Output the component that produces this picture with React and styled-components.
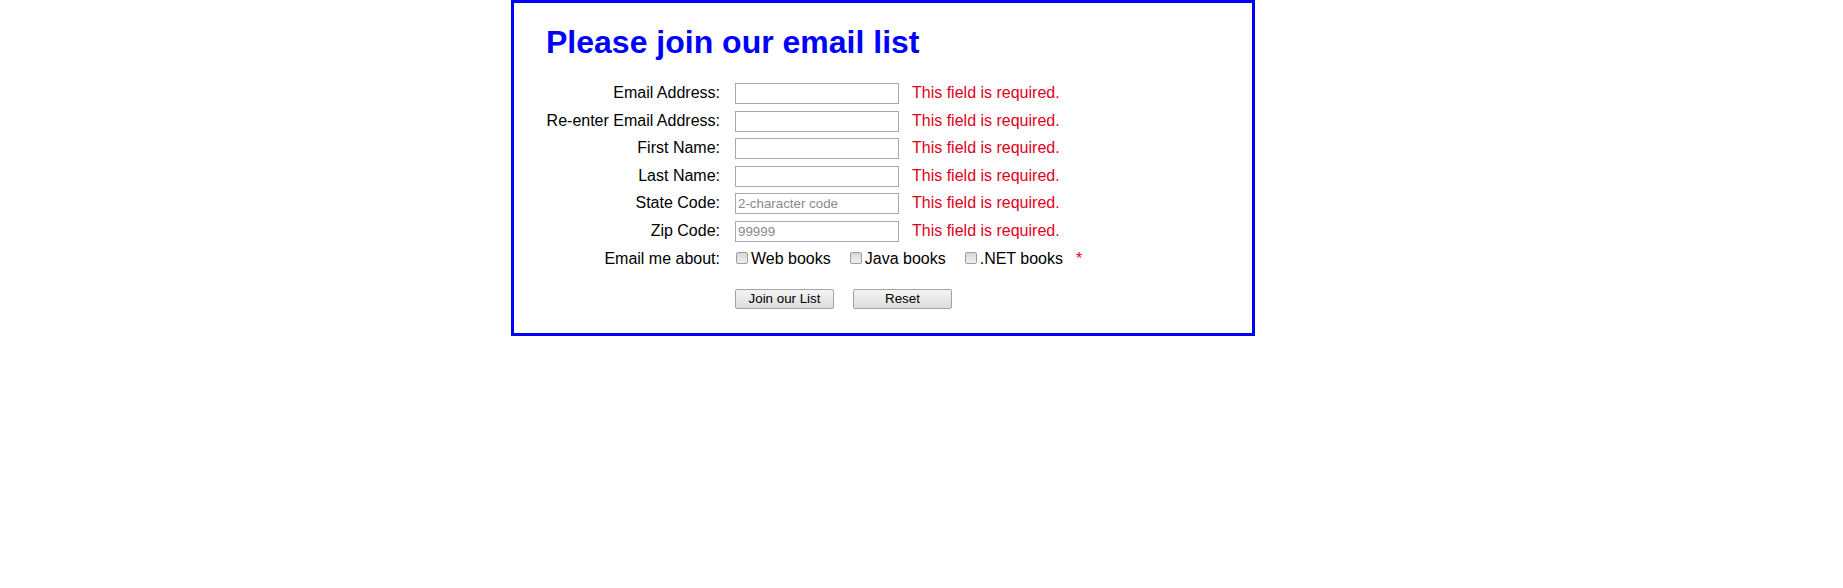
import React from 'react';
import styled, { createGlobalStyle } from 'styled-components';

const GlobalStyle = createGlobalStyle`
    html, body {
        margin: 0;
        padding: 0;
        background: #ffffff;
    }
    body {
        font-family: "Liberation Sans", Arial, sans-serif;
        font-size: 16px;
        color: #000000;
    }
`

//Page box
const Main = styled.main`
    box-sizing: border-box;
    width: 744px;
    margin-left: 511px;
    padding: 0 32px 24px 32px;
    border: 3px solid #0000ff;
    background-color: #ffffff;
`
const Title = styled.h1`
    margin: 21px 0 22px 0;
    font-size: 32px;
    font-weight: 700;
    color: #0000ff;
`

//Form
const Form = styled.form`
    display: flex;
    flex-direction: column;
    row-gap: 6.6px;
`
const Row = styled.div`
    display: flex;
    flex-direction: row;
    align-items: baseline;
    margin-top: ${p => (p.$shift ? '1px' : '0')};
`
const Label = styled.label`
    width: 174px;
    flex-shrink: 0;
    text-align: right;
`
const TextInput = styled.input`
    box-sizing: border-box;
    width: 164px;
    height: 21px;
    margin: 0 0 0 15px;
    padding: 1px 2px;
    border: 1px solid #a9a9a9;
    font-family: "Liberation Sans", Arial, sans-serif;
    font-size: 13.33px;
    outline: none;
    &::placeholder {
        color: #8a8a8a;
    }
`
const Error = styled.span`
    margin-left: 13px;
    color: #e2001a;
`
const Options = styled.div`
    display: flex;
    flex-direction: row;
    align-items: baseline;
    column-gap: 19px;
    margin-left: 16px;
`
const Option = styled.label`
    display: inline-flex;
    align-items: baseline;
    column-gap: 3px;
`
const Check = styled.input`
    appearance: none;
    box-sizing: border-box;
    width: 12px;
    height: 12px;
    margin: 0;
    border: 1px solid #9c9c9c;
    border-radius: 2px;
    background: linear-gradient(#d6d6d6, #f0f0f0);
`
const Star = styled.span`
    margin-left: -6px;
    color: #e2001a;
`
const Buttons = styled.div`
    display: flex;
    flex-direction: row;
    column-gap: 19px;
    margin: 21px 0 0 189px;
`
const Button = styled.button`
    box-sizing: border-box;
    width: 99px;
    height: 20px;
    padding: 0;
    border: 1px solid #a3a3a3;
    border-radius: 2px;
    background: linear-gradient(#f4f4f4, #dddddd);
    font-family: "Liberation Sans", Arial, sans-serif;
    font-size: 13.33px;
    color: #000000;
`

const fields = [
    { label: 'Email Address:' },
    { label: 'Re-enter Email Address:' },
    { label: 'First Name:' },
    { label: 'Last Name:' },
    { label: 'State Code:', placeholder: '2-character code' },
    { label: 'Zip Code:', placeholder: '99999' },
]

const books = ['Web books', 'Java books', '.NET books']

export default function App() {
  return (
    <>
      <GlobalStyle />
      <Main>
        <Title>{'Please join our email list'}</Title>
        <Form onSubmit={e => e.preventDefault()}>
          {fields.map(f => (
            <Row key={f.label}>
              <Label>{f.label}</Label>
              <TextInput type='text' placeholder={f.placeholder} />
              <Error>{'This field is required.'}</Error>
            </Row>
          ))}
          <Row $shift>
            <Label>{'Email me about:'}</Label>
            <Options>
              {books.map(b => (
                <Option key={b}>
                  <Check type='checkbox' />
                  {b}
                </Option>
              ))}
              <Star>{'*'}</Star>
            </Options>
          </Row>
        </Form>
        <Buttons>
          <Button type='button'>{'Join our List'}</Button>
          <Button type='reset'>{'Reset'}</Button>
        </Buttons>
      </Main>
    </>
  );
}
